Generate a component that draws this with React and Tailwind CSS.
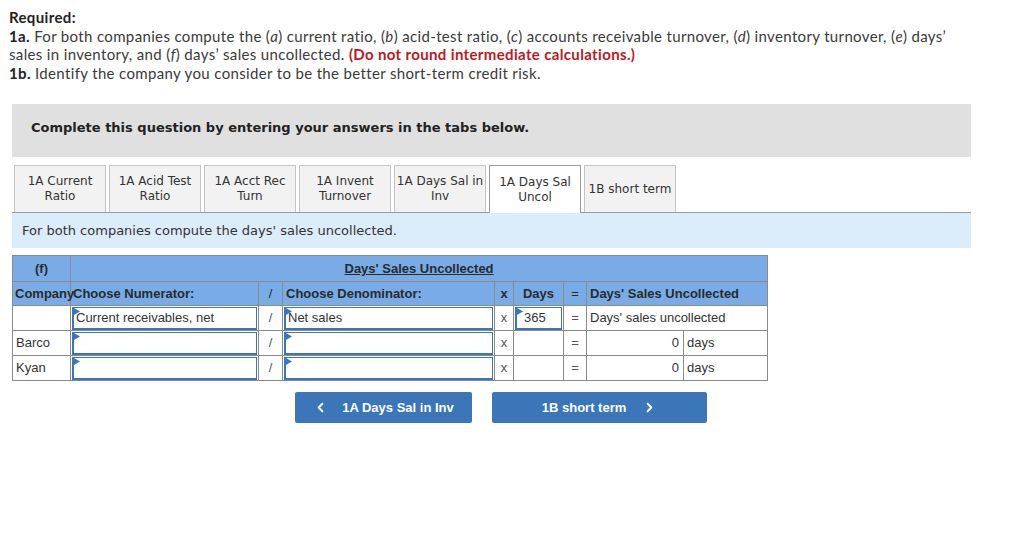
import React from 'react'
import { ChevronLeft, ChevronRight } from 'lucide-react'

const TABS = [
  ['1A Current', 'Ratio'],
  ['1A Acid Test', 'Ratio'],
  ['1A Acct Rec', 'Turn'],
  ['1A Invent', 'Turnover'],
  ['1A Days Sal in', 'Inv'],
  ['1A Days Sal', 'Uncol'],
  ['1B short term'],
]
const ACTIVE = 5

const cell = 'border border-[#8a8a8a] p-0'

function Flag() {
  return (
    <svg className="absolute left-0 top-0" width="6" height="7" viewBox="0 0 6 7">
      <polygon points="0,0 6,3.5 0,7" fill="#3a76c0" />
    </svg>
  )
}

function Field({ value }) {
  return (
    <div className="relative h-[23px] mx-[1px] border border-l-2 border-b-2 border-[#3a76c0] bg-white flex items-center">
      <Flag />
      <span className="px-[2px] w-full">{value}</span>
    </div>
  )
}

function DataRow({ name, num, den, days, result }) {
  return (
    <tr className="h-[25px]">
      <td className={`${cell} px-[3px]`}>{name}</td>
      <td className={cell}><Field value={num} /></td>
      <td className={`${cell} text-center text-[#555]`}>/</td>
      <td className={cell}><Field value={den} /></td>
      <td className={`${cell} text-center text-[#555]`}>x</td>
      <td className={cell}>{days !== undefined ? <Field value={<span className="pl-[5px]">{days}</span>} /> : null}</td>
      <td className={`${cell} text-center text-[#555]`}>=</td>
      {result === undefined ? (
        <td className={`${cell} px-[3px]`} colSpan={2}>Days' sales uncollected</td>
      ) : (
        <>
          <td className={`${cell} text-right px-[4px]`}>{result}</td>
          <td className={`${cell} px-[3px]`}>days</td>
        </>
      )}
    </tr>
  )
}

export default function App() {
  return (
    <div className="bg-white min-h-[541px] w-[1027px] pt-[8px] text-[#333]">
      <div className="pl-[9px] w-[968px] text-[15px] leading-[18.5px] tracking-[0.35px] font-['Lato',sans-serif] text-[#3a3a3a]">
        <p className="font-bold text-[#222]">Required:</p>
        <p>
          <b className="text-[#222]">1a.</b> For both companies compute the (<i>a</i>) current ratio, (<i>b</i>) acid-test ratio, (<i>c</i>) accounts receivable turnover, (<i>d</i>) inventory turnover, (<i>e</i>) days’ sales in inventory, and (<i>f</i>) days’ sales uncollected.{' '}
          <b className="text-[#c0171c]">(Do not round intermediate calculations.)</b>
        </p>
        <p>
          <b className="text-[#222]">1b.</b> Identify the company you consider to be the better short-term credit risk.
        </p>
      </div>

      <div className="ml-[12px] w-[959px] mt-[22px]">
        <div className="h-[53px] bg-[#e0e0e0] pl-[19px] pt-[14px] font-['DejaVu_Sans',Verdana,sans-serif] text-[13px] font-bold text-[#222]">
          Complete this question by entering your answers in the tabs below.
        </div>

        <div className="mt-[8px] flex items-end gap-[3px] pl-[2px] border-b border-[#9a9a9a] font-['DejaVu_Sans',Verdana,sans-serif] text-[12px] leading-[15px] text-[#333]">
          {TABS.map((t, i) => (
            <div
              key={i}
              className={`w-[92px] flex flex-col items-center justify-center text-center border border-b-0 ${
                i === ACTIVE ? 'bg-white border-[#9a9a9a] -mb-px h-[48px]' : 'bg-[#f2f2f2] border-[#c4c4c4] h-[47px]'
              }`}
            >
              {t.map((l) => (
                <span key={l} className="whitespace-nowrap">{l}</span>
              ))}
            </div>
          ))}
        </div>

        <div className="h-[35px] bg-[#dbecfa] pl-[10px] flex items-center font-['DejaVu_Sans',Verdana,sans-serif] text-[13px] text-[#333]">
          For both companies compute the days' sales uncollected.
        </div>
      </div>

      <table className="ml-[12px] mt-[7px] w-[755px] table-fixed border-collapse font-['Liberation_Sans',Arial,sans-serif] text-[13px] text-[#333]">
        <colgroup>
          <col className="w-[58px]" />
          <col className="w-[188px]" />
          <col className="w-[24px]" />
          <col className="w-[212px]" />
          <col className="w-[19px]" />
          <col className="w-[50px]" />
          <col className="w-[23px]" />
          <col className="w-[97px]" />
          <col className="w-[84px]" />
        </colgroup>
        <tbody>
          <tr className="h-[26px] bg-[#79ace6] text-[#2a2a2a] font-bold">
            <td className={`${cell} text-center`}>(f)</td>
            <td className={`${cell} text-center`} colSpan={8}>
              <span className="underline">Days' Sales Uncollected</span>
            </td>
          </tr>
          <tr className="h-[24px] bg-[#79ace6] text-[#2a2a2a] font-bold">
            <td className={`${cell} px-[2px] whitespace-nowrap overflow-visible`}>Company</td>
            <td className={`${cell} px-[2px]`}>Choose Numerator:</td>
            <td className={`${cell} text-center font-normal`}>/</td>
            <td className={`${cell} px-[3px]`}>Choose Denominator:</td>
            <td className={`${cell} text-center`}>x</td>
            <td className={`${cell} text-center`}>Days</td>
            <td className={`${cell} text-center font-normal`}>=</td>
            <td className={`${cell} px-[3px]`} colSpan={2}>Days' Sales Uncollected</td>
          </tr>
          <DataRow name="" num="Current receivables, net" den="Net sales" days="365" />
          <DataRow name="Barco" num="" den="" result="0" />
          <DataRow name="Kyan" num="" den="" result="0" />
        </tbody>
      </table>

      <div className="mt-[11px] ml-[295px] flex gap-[20px] font-['Liberation_Sans',Arial,sans-serif] text-[13px] font-bold text-white">
        <button className="w-[177px] h-[31px] rounded-[2px] bg-[#3a76b8] flex items-center justify-center gap-[14px]">
          <ChevronLeft className="w-[15px] h-[15px]" strokeWidth={3} />
          <span>1A Days Sal in Inv</span>
        </button>
        <button className="w-[215px] h-[31px] rounded-[2px] bg-[#3a76b8] flex items-center justify-center gap-[16px]">
          <span>1B short term</span>
          <ChevronRight className="w-[15px] h-[15px]" strokeWidth={3} />
        </button>
      </div>
    </div>
  )
}
